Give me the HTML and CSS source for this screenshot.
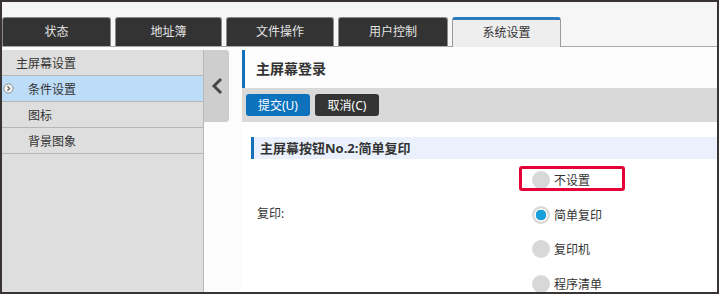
FILE: index.html
```html
<!DOCTYPE html>
<html lang="zh-CN">
<head>
  <meta charset="UTF-8" />
  <title>系统设置</title>
  <link rel="stylesheet" href="styles.css">
</head>
<body>
  <div class="frame">
    <div class="topbar"></div>
    <!-- Main tabs -->
    <nav class="tabs">
      <div class="tab w1">状态</div>
      <div class="tab w2">地址簿</div>
      <div class="tab w3">文件操作</div>
      <div class="tab w4">用户控制</div>
      <div class="tab w5 active">系统设置</div>
    </nav>
    <div class="page">
      <!-- Side menu -->
      <aside class="sidebar">
        <div class="menu-item top">主屏幕设置</div>
        <div class="menu-item selected">
          <svg class="mark" width="11" height="11" viewBox="0 0 11 11"><circle cx="5.5" cy="5.5" r="4.6" fill="#f6f6f6" stroke="#8a8a8a" stroke-width="1"/><polyline points="4.4,3.3 6.6,5.5 4.4,7.7" fill="none" stroke="#707070" stroke-width="1.5"/></svg>
          条件设置
        </div>
        <div class="menu-item sub">图标</div>
        <div class="menu-item sub">背景图象</div>
      </aside>
      <div class="collapse">
        <svg width="12" height="18" viewBox="0 0 12 18"><polyline points="10,2 3,9 10,16" fill="none" stroke="#474747" stroke-width="3"/></svg>
      </div>
      <main class="main">
        <div class="heading">主屏幕登录</div>
        <div class="toolbar">
          <button class="btn primary">提交(U)</button>
          <button class="btn dark">取消(C)</button>
        </div>
        <div class="section-title">主屏幕按钮No.2:简单复印</div>
        <div class="field">
          <div class="field-label">复印:</div>
          <div class="options">
            <label class="option highlight"><span class="radio"></span>不设置</label>
            <label class="option"><span class="radio checked"></span>简单复印</label>
            <label class="option"><span class="radio"></span>复印机</label>
            <label class="option"><span class="radio"></span>程序清单</label>
          </div>
        </div>
      </main>
    </div>
  </div>
</body>
</html>
```

FILE: styles.css
```css
html, body { margin: 0; padding: 0; }
body {
  font-family: "Noto Sans", "Noto Sans CJK SC", sans-serif;
  color: #333;
  background: #fff;
}
.frame {
  width: 719px;
  height: 294px;
  box-sizing: border-box;
  border: 2px solid #3a3333;
  background: #fcfcfc;
  overflow: hidden;
  display: flex;
  flex-direction: column;
}
.topbar { height: 15px; flex-shrink: 0; background: #f6f6f6; }
/* Tabs */
.tabs {
  display: flex;
  flex-shrink: 0;
  height: 30px;
  box-sizing: border-box;
  border-bottom: 1px solid #a9a9a9;
  background: #f6f6f6;
}
.tab {
  height: 29px;
  box-sizing: border-box;
  margin-right: 4px;
  background: #333;
  color: #e4e4e4;
  border: 1px solid #8c8c8c;
  border-bottom: none;
  border-radius: 3px 3px 0 0;
  font-size: 12px;
  line-height: 28px;
  text-align: center;
}
.w1 { width: 109px; }
.w2 { width: 107px; }
.w3 { width: 108px; }
.w4 { width: 110px; }
.w5 { width: 109px; }
.tab.active {
  height: 30px;
  background: #eeeeee;
  color: #333;
  border-color: #9a9a9a;
  border-top: 3px solid #2b7bc1;
  line-height: 25px;
}
/* Page body */
.page {
  flex: 1;
  min-height: 0;
  overflow: hidden;
  display: flex;
  padding-top: 3px;
  background: #fcfcfc;
}
.sidebar {
  width: 202px;
  flex-shrink: 0;
  box-sizing: border-box;
  background: #dedede;
  border-right: 1px solid #b9b9b9;
}
.menu-item {
  height: 26px;
  box-sizing: border-box;
  border-bottom: 1px solid #b6b6b6;
  display: flex;
  align-items: center;
  font-size: 12px;
  padding-left: 26px;
}
.menu-item.top { padding-left: 14px; }
.menu-item.selected { background: #bddcf8; padding-left: 1px; }
.mark { margin-right: 14px; }
.collapse {
  align-self: flex-start;
  flex-shrink: 0;
  width: 25px;
  height: 72px;
  background: #cecece;
  border-radius: 0 3px 3px 0;
  display: flex;
  align-items: center;
  justify-content: center;
}
.main { flex: 1; margin-left: 13px; background: #fff; }
.heading {
  height: 38px;
  box-sizing: border-box;
  border-left: 3px solid #1670b8;
  padding-left: 11px;
  background: #fcfcfc;
  font-size: 14px;
  font-weight: bold;
  line-height: 38px;
}
.toolbar {
  height: 34px;
  background: #d9d9d9;
  display: flex;
  align-items: center;
  gap: 5px;
  padding-left: 4px;
}
.btn {
  height: 22px;
  width: 64px;
  border: none;
  border-radius: 3px;
  color: #fff;
  font-family: inherit;
  font-size: 12px;
  padding: 0;
}
.btn.primary { background: #0b72bb; }
.btn.dark { background: #343434; }
.section-title {
  margin: 15px 0 0 9px;
  height: 22px;
  box-sizing: border-box;
  border-left: 3px solid #1670b8;
  padding-left: 6px;
  background: #eaf1fc;
  font-size: 13px;
  font-weight: bold;
  line-height: 22px;
}
.field { display: flex; margin-top: 4px; }
.field-label {
  width: 290px;
  box-sizing: border-box;
  padding: 43px 0 0 15px;
  font-size: 12px;
  line-height: 16px;
}
.option {
  height: 34.5px;
  display: flex;
  align-items: center;
  gap: 4px;
  font-size: 12px;
  position: relative;
}
.radio {
  width: 18px;
  height: 18px;
  border-radius: 50%;
  background: #d8d8d8;
}
.radio.checked {
  background: radial-gradient(circle, #19a0dc 0 5px, #f4f4f4 5.5px 6.5px, #d8d8d8 7px);
}
/* Red annotation box */
.option.highlight::after {
  content: "";
  position: absolute;
  left: -13px;
  top: 3px;
  width: 106px;
  height: 25px;
  box-sizing: border-box;
  border: 3px solid #e60039;
  border-radius: 3px;
}
```
